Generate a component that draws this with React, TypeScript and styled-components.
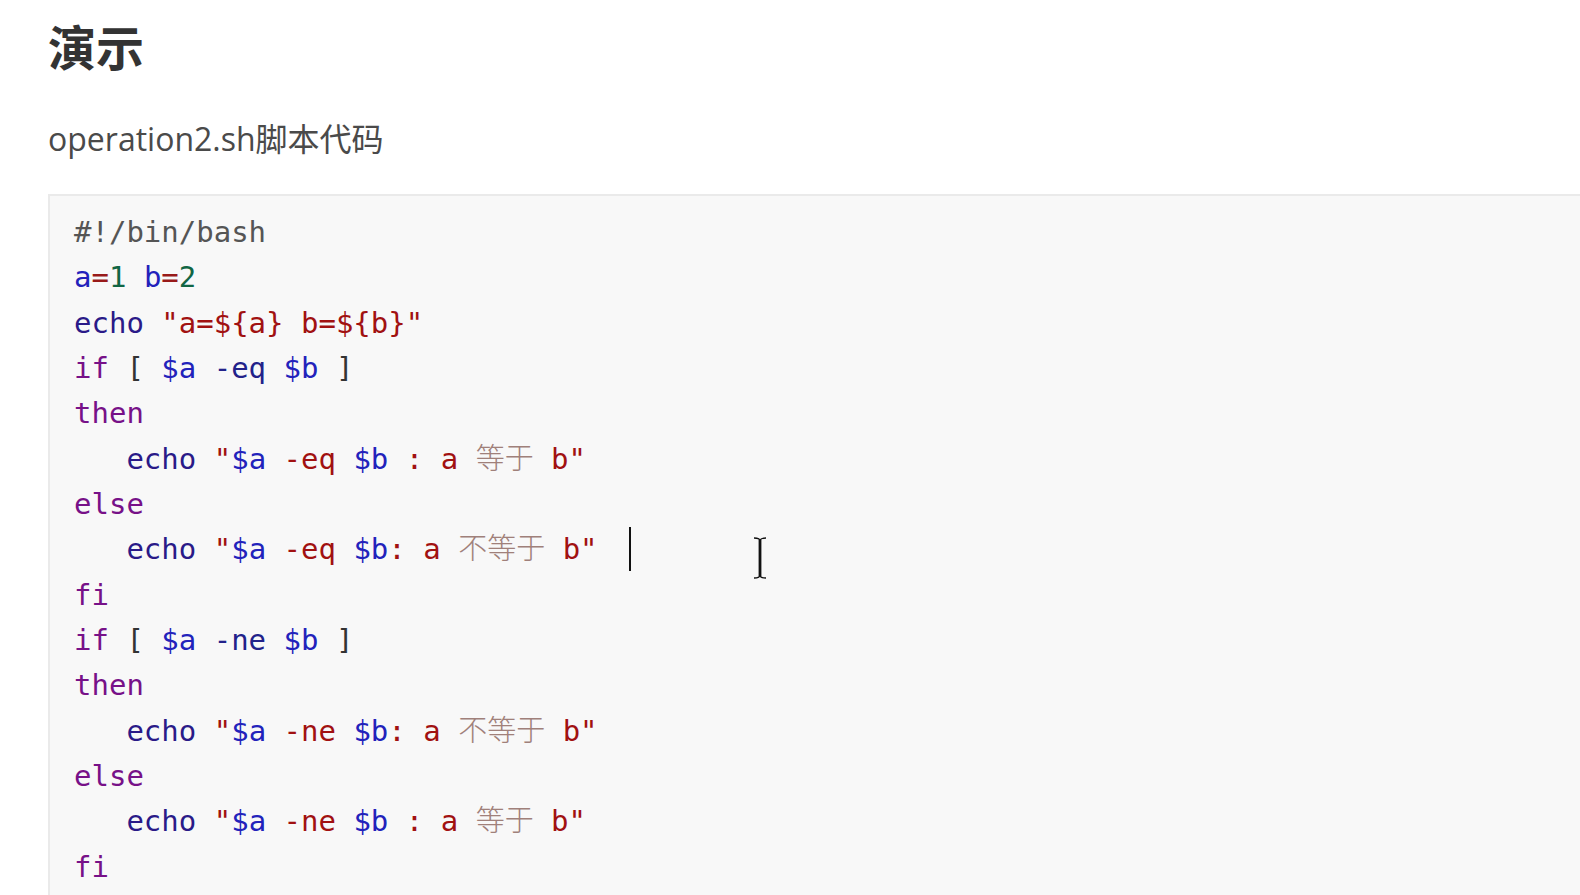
import React from "react";
import styled, { createGlobalStyle } from "styled-components";

const Global = createGlobalStyle`
  html, body { margin: 0; padding: 0; background: #ffffff; }
  body { font-family: "Open Sans", "Noto Sans CJK SC", sans-serif; overflow: hidden; }
`;

const Page = styled.div`
  width: 1580px;
  height: 895px;
  overflow: hidden;
  padding-left: 48px;
  box-sizing: border-box;
`;

const Heading = styled.h2`
  margin: 0;
  padding-top: 21px;
  font-family: "Open Sans", "Noto Sans CJK SC", sans-serif;
  font-size: 48px;
  line-height: 54px;
  font-weight: 700;
  color: #333333;
`;

const Para = styled.p`
  margin: 0;
  padding-top: 42px;
  font-family: "Open Sans", "Noto Sans CJK SC", sans-serif;
  font-size: 32px;
  line-height: 44px;
  color: #4a4a4a;
`;

const CodeBlock = styled.pre`
  position: relative;
  margin: 33px 0 0 0;
  padding: 14px 0 20px 24px;
  background: #f8f8f8;
  border-top: 2px solid #eaeaea;
  border-left: 2px solid #eaeaea;
  font-family: "DejaVu Sans Mono", "Noto Sans CJK SC", monospace;
  font-size: 29px;
  line-height: 45.35px;
  color: #333333;
`;

const Line = styled.div`
  white-space: pre;
  height: 45.35px;
`;

type Kind = "meta" | "var" | "op" | "num" | "builtin" | "str" | "kw" | "plain" | "attr" | "cjk";

const colors: Record<Kind, string> = {
  meta: "#555555",
  var: "#2222bb",
  op: "#981a1a",
  num: "#116644",
  builtin: "#2a1a88",
  str: "#a11111",
  kw: "#771188",
  plain: "#333333",
  attr: "#22228a",
  cjk: "#a0807a",
};

const Tok = styled.span<{ $k: Kind }>`
  color: ${(p) => colors[p.$k]};
  font-family: ${(p) =>
    p.$k === "cjk"
      ? `"Noto Sans CJK SC", sans-serif`
      : `"DejaVu Sans Mono", monospace`};
  font-weight: ${(p) => (p.$k === "cjk" ? 300 : 400)};
  line-height: ${(p) => (p.$k === "cjk" ? "1" : "inherit")};
`;

const Caret = styled.span`
  display: inline-block;
  width: 2px;
  height: 44px;
  background: #111111;
  vertical-align: -12px;
  margin-left: 31px;
`;

const MousePointer = styled.svg`
  position: absolute;
  left: 703px;
  top: 341px;
`;

type T = [Kind, string];

const L = (...toks: T[]) => toks;

const lines: T[][] = [
  L(["meta", "#!/bin/bash"]),
  L(["var", "a"], ["op", "="], ["num", "1"], ["plain", " "], ["var", "b"], ["op", "="], ["num", "2"]),
  L(["builtin", "echo"], ["plain", " "], ["str", "\"a=${a} b=${b}\""]),
  L(["kw", "if"], ["plain", " [ "], ["var", "$a"], ["plain", " "], ["attr", "-eq"], ["plain", " "], ["var", "$b"], ["plain", " ]"]),
  L(["kw", "then"]),
  L(["plain", "   "], ["builtin", "echo"], ["plain", " "], ["str", "\""], ["var", "$a"], ["str", " -eq "], ["var", "$b"], ["str", " : a "], ["cjk", "等于"], ["str", " b\""]),
  L(["kw", "else"]),
  L(["plain", "   "], ["builtin", "echo"], ["plain", " "], ["str", "\""], ["var", "$a"], ["str", " -eq "], ["var", "$b"], ["str", ": a "], ["cjk", "不等于"], ["str", " b\""]),
  L(["kw", "fi"]),
  L(["kw", "if"], ["plain", " [ "], ["var", "$a"], ["plain", " "], ["attr", "-ne"], ["plain", " "], ["var", "$b"], ["plain", " ]"]),
  L(["kw", "then"]),
  L(["plain", "   "], ["builtin", "echo"], ["plain", " "], ["str", "\""], ["var", "$a"], ["str", " -ne "], ["var", "$b"], ["str", ": a "], ["cjk", "不等于"], ["str", " b\""]),
  L(["kw", "else"]),
  L(["plain", "   "], ["builtin", "echo"], ["plain", " "], ["str", "\""], ["var", "$a"], ["str", " -ne "], ["var", "$b"], ["str", " : a "], ["cjk", "等于"], ["str", " b\""]),
  L(["kw", "fi"]),
];

export default function App() {
  return (
    <Page>
      <Global />
      <Heading>演示</Heading>
      <Para>operation2.sh脚本代码</Para>
      <CodeBlock>
        {lines.map((toks, i) => (
          <Line key={i}>
            {toks.map(([k, t], j) => (
              <Tok key={j} $k={k}>
                {t}
              </Tok>
            ))}
            {i === 7 && <Caret />}
          </Line>
        ))}
        <MousePointer width="14" height="42" viewBox="0 0 14 42">
          <path d="M1 1 Q7 1 7 4 Q7 1 13 1" stroke="#111" strokeWidth="1.4" fill="none" />
          <rect x="5.6" y="3" width="2.8" height="36" fill="#111" />
          <path d="M1 41 Q7 41 7 38 Q7 41 13 41" stroke="#111" strokeWidth="1.4" fill="none" />
        </MousePointer>
      </CodeBlock>
    </Page>
  );
}
